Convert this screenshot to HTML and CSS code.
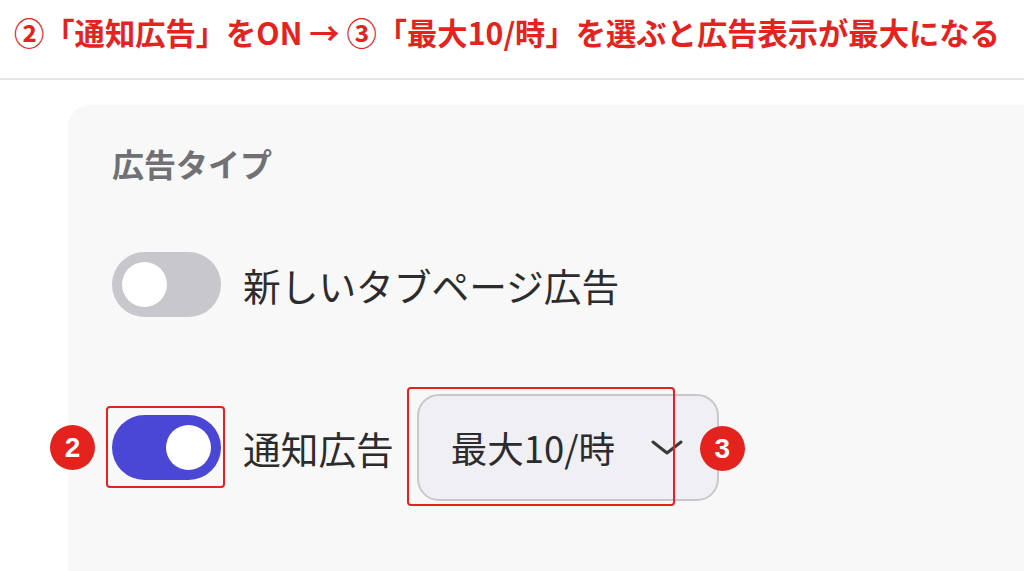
FILE: index.html
```html
<!DOCTYPE html>
<html lang="ja">
<head>
<meta charset="utf-8">
<link rel="stylesheet" href="styles.css">
</head>
<body>
<header class="caption">②「通知広告」をON → ③「最大10/時」を選ぶと広告表示が最大になる</header>
<main class="page">
  <section class="card">
    <h2 class="label">広告タイプ</h2>
    <div class="row row-first">
      <span class="toggle toggle-off"><span class="knob"></span></span>
      <span class="row-text">新しいタブページ広告</span>
    </div>
    <div class="row row-second">
      <span class="toggle toggle-on">
        <span class="knob"></span>
        <span class="mark mark-toggle"></span>
        <span class="badge badge-two">2</span>
      </span>
      <span class="row-text">通知広告</span>
      <span class="select">
        <span class="select-text">最大10/時</span>
        <svg class="chevron" width="32" height="16" viewBox="0 0 32 16"><path d="M2 2 L16 13 L30 2" fill="none" stroke="#3a3a3c" stroke-width="3" stroke-linecap="round" stroke-linejoin="round"/></svg>
        <span class="mark mark-select"></span>
        <span class="badge badge-three">3</span>
      </span>
    </div>
  </section>
</main>
</body>
</html>
```

FILE: styles.css
```css
* { box-sizing: border-box; }
html, body { margin: 0; padding: 0; }
body {
  width: 1024px;
  height: 571px;
  overflow: hidden;
  background: #ffffff;
  font-family: "Noto Sans CJK JP", "Noto Sans", sans-serif;
}
.caption {
  height: 80px;
  border-bottom: 2px solid #e6e6e6;
  padding: 12px 0 0 14px;
  color: #e4221e;
  font-weight: 700;
  font-size: 30.3px;
  line-height: 40px;
  letter-spacing: 0;
  white-space: nowrap;
}
.page {
  padding: 25px 0 0 68px;
}
.card {
  background: #f8f8f9;
  border-top-left-radius: 22px;
  height: 480px;
  padding: 36px 0 0 44px;
}
.label {
  margin: 0;
  font-size: 32px;
  font-weight: 700;
  color: #707075;
  line-height: 44px;
}
.row {
  display: flex;
  align-items: center;
  color: #2c2c2e;
}
.row-first { margin-top: 67px; }
.row-second { margin-top: 77px; }
.row-text {
  font-size: 37.7px;
  line-height: 50px;
  margin-left: 22px;
}
.toggle {
  position: relative;
  display: inline-block;
  width: 109px;
  height: 65px;
  border-radius: 33px;
  flex: none;
}
.toggle-off { background: #c7c7cc; }
.toggle-on { background: #4a46d6; }
.knob {
  position: absolute;
  top: 10px;
  width: 45px;
  height: 45px;
  border-radius: 50%;
  background: #ffffff;
}
.toggle-off .knob { left: 10px; }
.toggle-on .knob { right: 10px; }
.mark {
  position: absolute;
  border: 2px solid #e4221e;
  border-radius: 4px;
}
.mark-toggle { left: -6px; top: -9px; right: -4px; bottom: -8px; }
.badge {
  position: absolute;
  width: 45px;
  height: 45px;
  border-radius: 50%;
  background: #e4221e;
  color: #ffffff;
  font-family: "Liberation Sans", Arial, sans-serif;
  font-weight: 700;
  font-size: 28px;
  line-height: 45px;
  text-align: center;
}
.badge-two { left: -62px; top: 10px; }
.select {
  position: relative;
  display: flex;
  align-items: center;
  margin-left: 23px;
  width: 302px;
  height: 107px;
  background: #efeff4;
  border: 2px solid #c8c8cc;
  border-radius: 22px;
  padding-left: 32px;
}
.select-text {
  font-size: 36.5px;
  line-height: 50px;
  color: #2c2c2e;
}
.chevron {
  position: absolute;
  left: 232px;
  top: 44px;
}
.mark-select { left: -12px; top: -9px; width: 268px; bottom: -7px; }
.badge-three { left: 281px; top: 30px; }
```
